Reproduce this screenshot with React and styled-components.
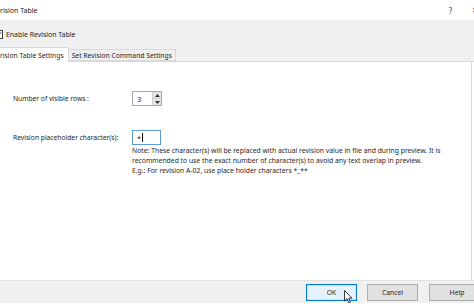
import React from "react";
import styled, { createGlobalStyle } from "styled-components";

const Global = createGlobalStyle`
  html, body { margin: 0; padding: 0; background: #ffffff; }
  body { font-family: "Noto Sans", "Open Sans", sans-serif; color: #1f1f1f; }
  * { box-sizing: border-box; }
`;

const Window = styled.div`
  width: 474px;
  height: 304px;
  overflow: hidden;
  display: flex;
  flex-direction: column;
  background: #ffffff;
  font-size: 7px;
`;

const TitleBar = styled.div`
  height: 20px;
  flex: none;
  display: flex;
  align-items: center;
  justify-content: space-between;
  background: #ffffff;
  font-size: 7px;
  color: #222;
`;

const Title = styled.span``;

const TitleButtons = styled.div`
  display: flex;
  align-items: center;
  gap: 20px;
  margin-right: -4px;
  color: #333;
`;

const TitleBtn = styled.span`
  font-size: ${(p) => p.$size || 8}px;
`;

const Header = styled.div`
  flex: none;
  height: 42px;
  background: #f0f0f0;
  display: flex;
  flex-direction: column;
  justify-content: space-between;
  border-top: 1px solid #f3f3f3;
`;

const CheckRow = styled.label`
  display: flex;
  align-items: center;
  gap: 3px;
  margin-top: 9px;
  margin-left: -6px;
  font-size: 6.9px;
  color: #1f1f1f;
`;

const CheckBox = styled.span`
  width: 9px;
  height: 9px;
  border: 1px solid #444;
  background: #fff;
  display: flex;
  align-items: center;
  justify-content: center;
`;

const TabStrip = styled.div`
  display: flex;
  align-items: flex-end;
  height: 14px;
  border-bottom: 1px solid #d9d9d9;
`;

const Tab = styled.div`
  height: ${(p) => (p.$active ? 15 : 12)}px;
  margin-bottom: ${(p) => (p.$active ? -1 : 0)}px;
  padding: 0 ${(p) => (p.$active ? 4 : 3)}px 0 ${(p) => (p.$active ? 0 : 3)}px;
  display: flex;
  align-items: center;
  background: ${(p) => (p.$active ? "#ffffff" : "#f0f0f0")};
  border: 1px solid #d9d9d9;
  border-bottom: ${(p) => (p.$active ? "none" : "1px solid #d9d9d9")};
  border-left: none;
  font-size: 6.75px;
  color: #1f1f1f;
  white-space: nowrap;
`;

const Content = styled.div`
  flex: 1;
  background: #ffffff;
  border-right: 1px solid #dcdcdc;
  margin-right: 2px;
  padding: 29px 0 0 13px;
  display: flex;
  flex-direction: column;
`;

const FieldRow = styled.div`
  display: grid;
  grid-template-columns: 119px auto;
  align-items: center;
  margin-bottom: ${(p) => p.$mb || 0}px;
`;

const Label = styled.span`
  font-size: 6.7px;
  color: #1f1f1f;
  white-space: nowrap;
`;

const SpinBox = styled.div`
  width: 30px;
  height: 15px;
  border: 1px solid #a9a9a9;
  display: flex;
  background: #fff;
`;

const SpinValue = styled.span`
  flex: 1;
  font-size: 7.5px;
  padding-left: 4px;
  display: flex;
  align-items: center;
`;

const SpinArrows = styled.div`
  width: 9px;
  display: flex;
  flex-direction: column;
  border-left: 1px solid #d0d0d0;
  background: #e6e6e6;
`;

const Arrow = styled.div`
  flex: 1;
  display: flex;
  align-items: center;
  justify-content: center;
  border-bottom: ${(p) => (p.$top ? "1px solid #cfcfcf" : "none")};
`;

const TextBox = styled.div`
  width: 29px;
  height: 15px;
  border: 1px solid #5d9bd4;
  background: #fff;
  font-size: 7.5px;
  padding-left: 4px;
  display: flex;
  align-items: center;
`;

const Caret = styled.span`
  display: inline-block;
  width: 1px;
  height: 9px;
  background: #111;
  margin-left: 0.5px;
`;

const Note = styled.p`
  margin: 1px 0 0 119px;
  font-size: 6.8px;
  line-height: 10.2px;
  color: #1f1f1f;
  white-space: nowrap;
`;

const Footer = styled.div`
  flex: none;
  height: 23px;
  margin-bottom: 1px;
  background: #f0f0f0;
  border-top: 1px solid #e2e2e2;
  display: flex;
  align-items: center;
  justify-content: flex-end;
  gap: 10px;
  margin-right: -11px;
`;

const Button = styled.div`
  position: relative;
  width: ${(p) => p.$w || 51}px;
  height: 17px;
  margin-left: ${(p) => p.$ml || 0}px;
  display: flex;
  align-items: center;
  justify-content: center;
  font-size: 6.8px;
  color: #1f1f1f;
  background: ${(p) => (p.$primary ? "#e5f1fb" : "#e1e1e1")};
  border: 1px solid ${(p) => (p.$primary ? "#0078d7" : "#adadad")};
  box-shadow: ${(p) => (p.$primary ? "inset 0 0 0 1px #cde4f7" : "none")};
`;

const Cursor = styled.svg`
  position: absolute;
  left: 37px;
  top: 5px;
`;

export default function App() {
  return (
    <>
      <Global />
      <Window>
        <TitleBar>
          <Title>rision Table</Title>
          <TitleButtons>
            <TitleBtn>?</TitleBtn>
            <TitleBtn $size={10}>×</TitleBtn>
          </TitleButtons>
        </TitleBar>
        <Header>
          <CheckRow>
            <CheckBox>
              <svg width="7" height="7" viewBox="0 0 7 7">
                <path d="M1 3.6 L2.8 5.4 L6 1.5" fill="none" stroke="#222" strokeWidth="1" />
              </svg>
            </CheckBox>
            Enable Revision Table
          </CheckRow>
          <TabStrip>
            <Tab $active>rision Table Settings</Tab>
            <Tab>Set Revision Command Settings</Tab>
          </TabStrip>
        </Header>
        <Content>
          <FieldRow $mb={24}>
            <Label>Number of visible rows :</Label>
            <SpinBox>
              <SpinValue>3</SpinValue>
              <SpinArrows>
                <Arrow $top>
                  <svg width="5" height="3" viewBox="0 0 5 3"><path d="M0 3 L2.5 0 L5 3 Z" fill="#333" /></svg>
                </Arrow>
                <Arrow>
                  <svg width="5" height="3" viewBox="0 0 5 3"><path d="M0 0 L2.5 3 L5 0 Z" fill="#333" /></svg>
                </Arrow>
              </SpinArrows>
            </SpinBox>
          </FieldRow>
          <FieldRow>
            <Label>Revision placeholder character(s):</Label>
            <TextBox>*<Caret /></TextBox>
          </FieldRow>
          <Note>
            Note: These character(s) will be replaced with actual revision value in file and during preview. It is
            <br />
            recommended to use the exact number of character(s) to avoid any text overlap in preview.
            <br />
            E.g.: For revision A-02, use place holder characters *_**
          </Note>
        </Content>
        <Footer>
          <Button $primary>
            OK
            <Cursor width="9" height="14" viewBox="0 0 9 14">
              <path d="M0.5 0.5 L0.5 11 L3 8.6 L4.8 12.8 L6.4 12.1 L4.7 8.2 L8 8.2 Z" fill="#fff" stroke="#222" strokeWidth="0.9" strokeLinejoin="round" />
            </Cursor>
          </Button>
          <Button>Cancel</Button>
          <Button $w={56} $ml={1}>Help</Button>
        </Footer>
      </Window>
    </>
  );
}
